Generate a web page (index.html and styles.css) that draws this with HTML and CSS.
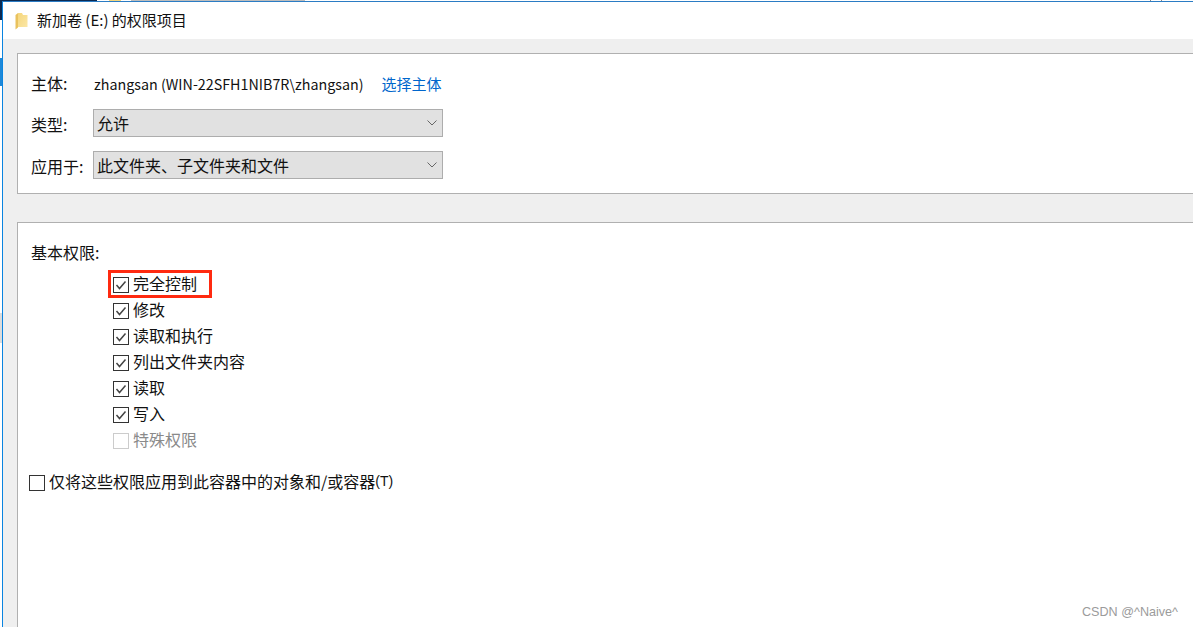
FILE: index.html
```html
<!DOCTYPE html>
<html lang="zh-CN">
<head>
<meta charset="utf-8">
<title>新加卷 (E:) 的权限项目</title>
<link rel="stylesheet" href="styles.css">
</head>
<body>
<div class="bg bg-dark"></div>
<div class="bg bg-yellow"></div>
<div class="bg bg-grey"></div>
<div class="bg bg-tick1"></div>
<div class="bg bg-tick2"></div>
<div class="bg bg-darkside"></div>
<div class="bg bg-blue"></div>
<div class="bg bg-greyside"></div>
<main class="window">
  <header class="titlebar">
    <svg class="folder" width="13" height="18" viewBox="0 0 13 18"><defs><linearGradient id="fg" x1="0" y1="0" x2="1" y2="1"><stop offset="0" stop-color="#f5d67c"/><stop offset="1" stop-color="#fbe7a6"/></linearGradient></defs><path d="M3 1 H7 L8 3 H12.5 V15 H3 Z" fill="url(#fg)"/><path d="M0.5 3 L3 1 V15.5 L0.5 17.5 Z" fill="#e9c25e"/></svg>
    <span>新加卷 (E:) 的权限项目</span>
  </header>
  <div class="body">
    <section class="panel top">
      <div class="row principal">
        <span class="lab">主体:</span>
        <span class="who">zhangsan (WIN-22SFH1NIB7R\zhangsan)</span>
        <a class="link">选择主体</a>
      </div>
      <div class="row type">
        <span class="lab">类型:</span>
        <div class="select"><span>允许</span><svg width="10" height="6" viewBox="0 0 10 6"><path d="M0.5 0.5 L5 5 L9.5 0.5" fill="none" stroke="#666" stroke-width="1"/></svg></div>
      </div>
      <div class="row apply">
        <span class="lab">应用于:</span>
        <div class="select"><span>此文件夹、子文件夹和文件</span><svg width="10" height="6" viewBox="0 0 10 6"><path d="M0.5 0.5 L5 5 L9.5 0.5" fill="none" stroke="#666" stroke-width="1"/></svg></div>
      </div>
    </section>
    <section class="panel bottom">
      <div class="basic">基本权限:</div>
      <ul class="perms">
        <li class="perm"><span class="box"><svg width="14" height="14" viewBox="0 0 14 14"><path d="M2.5 7 L5.5 10.5 L11.5 3.5" fill="none" stroke="#444" stroke-width="1.5"/></svg></span>完全控制<span class="redbox"></span></li>
        <li class="perm"><span class="box"><svg width="14" height="14" viewBox="0 0 14 14"><path d="M2.5 7 L5.5 10.5 L11.5 3.5" fill="none" stroke="#444" stroke-width="1.5"/></svg></span>修改</li>
        <li class="perm"><span class="box"><svg width="14" height="14" viewBox="0 0 14 14"><path d="M2.5 7 L5.5 10.5 L11.5 3.5" fill="none" stroke="#444" stroke-width="1.5"/></svg></span>读取和执行</li>
        <li class="perm"><span class="box"><svg width="14" height="14" viewBox="0 0 14 14"><path d="M2.5 7 L5.5 10.5 L11.5 3.5" fill="none" stroke="#444" stroke-width="1.5"/></svg></span>列出文件夹内容</li>
        <li class="perm"><span class="box"><svg width="14" height="14" viewBox="0 0 14 14"><path d="M2.5 7 L5.5 10.5 L11.5 3.5" fill="none" stroke="#444" stroke-width="1.5"/></svg></span>读取</li>
        <li class="perm"><span class="box"><svg width="14" height="14" viewBox="0 0 14 14"><path d="M2.5 7 L5.5 10.5 L11.5 3.5" fill="none" stroke="#444" stroke-width="1.5"/></svg></span>写入</li>
        <li class="perm off"><span class="box"></span>特殊权限</li>
      </ul>
      <div class="only"><span class="box"></span>仅将这些权限应用到此容器中的对象和/或容器<span class="accel">(T)</span></div>
    </section>
  </div>
</main>
<div class="mark">CSDN @^Naive^</div>
</body>
</html>
```

FILE: styles.css
```css
* { box-sizing: border-box; }
html, body { margin: 0; height: 627px; overflow: hidden; }
body {
  position: relative;
  background: #fff;
  font-family: "Noto Sans CJK SC", "Noto Sans", sans-serif;
  font-size: 16px;
  color: #111;
}
.bg { position: absolute; }
.bg-dark { left: 0; top: 0; width: 97px; height: 1px; background: #0b2a52; }
.bg-yellow { left: 109px; top: 0; width: 12px; height: 1px; background: #f3d67f; }
.bg-grey { left: 131px; top: 0; width: 174px; height: 1px; background: #bdbdbd; }
.bg-tick1 { left: 1150px; top: 0; width: 1px; height: 1px; background: #888; }
.bg-tick2 { left: 1161px; top: 0; width: 1px; height: 1px; background: #888; }
.bg-darkside { left: 0; top: 0; width: 2px; height: 20px; background: #0b2a52; }
.bg-blue { left: 0; top: 58px; width: 2px; height: 28px; background: #1e88d8; }
.bg-greyside { left: 0; top: 313px; width: 2px; height: 30px; background: #dcdcdc; }
.window {
  position: absolute;
  left: 2px; top: 1px; right: 0; bottom: 0;
  border-top: 1px solid #2b7cc4;
  border-left: 1px solid #0a84e0;
  display: flex;
  flex-direction: column;
}
.titlebar {
  height: 37px;
  flex: none;
  display: flex;
  align-items: center;
  background: #fff;
  padding: 0 0 3px 12px;
  gap: 9px;
  font-size: 15px;
}
.folder { flex: none; margin-top: 3px; }
.body {
  flex: 1;
  background: #efefef;
  padding: 14px 0 0 14px;
  display: flex;
  flex-direction: column;
  gap: 28px;
}
.panel {
  background: #fff;
  border: 1px solid #b0b0b0;
  border-right: 0;
}
.top { height: 141px; padding: 18px 0 0 13px; }
.bottom { flex: 1; border-bottom: 0; padding: 18px 0 0 13px; }
.row { display: flex; align-items: center; }
.lab { width: 62px; flex: none; }
.type .lab, .apply .lab { padding-top: 2px; }
.principal { height: 24px; padding-bottom: 2px; white-space: nowrap; }
.principal .lab { width: 63px; }
.who { font-size: 14.3px; }
.link { color: #0066cc; font-size: 15px; margin-left: 18px; }
.type { margin-top: 13px; }
.apply { margin-top: 14px; }
.select {
  width: 350px;
  height: 28px;
  border: 1px solid #adadad;
  background: #e1e1e1;
  display: flex;
  align-items: center;
  justify-content: space-between;
  padding: 0 5px 0 3px;
}
.basic { height: 22px; line-height: 22px; }
.perms { list-style: none; margin: 9px 0 0; padding: 0 0 0 82px; }
.perm { height: 26px; padding-bottom: 4px; display: flex; align-items: center; position: relative; }
.box {
  width: 16px; height: 16px;
  flex: none;
  border: 1px solid #333;
  margin: 4px 4px 0 0;
  background: #fff;
  display: block;
}
.box svg { display: block; }
.off { color: #8a8a8a; }
.off .box { border-color: #ccc; }
.redbox {
  position: absolute;
  left: -5px; top: -2px;
  width: 104px; height: 28px;
  border: 3px solid #ff2a10;
}
.only { display: flex; align-items: center; margin: 17px 0 0 -2px; height: 24px; padding-bottom: 4px; white-space: nowrap; }
.accel { font-family: "Liberation Sans", sans-serif; font-size: 14px; }
.mark {
  position: absolute;
  right: 15px; top: 605px;
  font-family: "Liberation Sans", sans-serif;
  font-size: 12.6px;
  color: #9b9b9b;
}
```
